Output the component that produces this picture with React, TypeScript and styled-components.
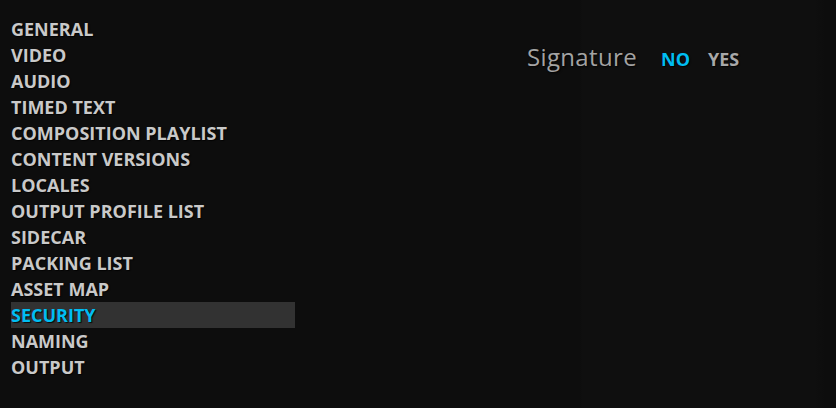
import React from "react";
import styled, { createGlobalStyle } from "styled-components";

const Global = createGlobalStyle`
  html, body { margin: 0; padding: 0; background: #0d0d0d; }
  body { font-family: "Open Sans", "Liberation Sans", sans-serif; }
`;

const Page = styled.div`
  width: 836px;
  height: 408px;
  display: flex;
  background:
    linear-gradient(90deg, transparent 0, transparent 580px, #0f0f0f 582px, #0f0f0f 815px, #0d0d0d 825px),
    #0d0d0d;
  overflow: hidden;
`;

const Menu = styled.ul`
  list-style: none;
  margin: 0;
  padding: 16px 0 0 11px;
  width: 284px;
  flex: none;
  display: flex;
  flex-direction: column;
`;

const MenuItem = styled.li<{ $active?: boolean }>`
  height: 26px;
  line-height: 26px;
  font-size: 18px;
  font-weight: 700;
  color: ${(p) => (p.$active ? "#00bdf2" : "#c9c9c9")};
  background: ${(p) => (p.$active ? "#323232" : "transparent")};
  text-shadow: 1px 1px 1px rgba(0, 0, 0, 0.8);
  white-space: nowrap;
`;

const Content = styled.div`
  flex: 1;
  padding: 40px 0 0 232px;
`;

const Field = styled.div`
  display: flex;
  align-items: baseline;
`;

const Label = styled.span`
  font-size: 24px;
  letter-spacing: 0.35px;
  color: #a3a3a3;
  text-shadow: 1px 1px 2px rgba(0, 0, 0, 0.9);
  margin-right: 24px;
`;

const Option = styled.span<{ $selected?: boolean }>`
  font-size: 18px;
  font-weight: 700;
  color: ${(p) => (p.$selected ? "#00bdf2" : "#a8a8a8")};
  text-shadow: 1px 1px 1px rgba(0, 0, 0, 0.8);
  margin-right: 18px;
`;

const items = [
  "GENERAL",
  "VIDEO",
  "AUDIO",
  "TIMED TEXT",
  "COMPOSITION PLAYLIST",
  "CONTENT VERSIONS",
  "LOCALES",
  "OUTPUT PROFILE LIST",
  "SIDECAR",
  "PACKING LIST",
  "ASSET MAP",
  "SECURITY",
  "NAMING",
  "OUTPUT",
];

export default function App() {
  return (
    <>
      <Global />
      <Page>
        <Menu>
          {items.map((it) => (
            <MenuItem key={it} $active={it === "SECURITY"}>
              {it}
            </MenuItem>
          ))}
        </Menu>
        <Content>
          <Field>
            <Label>Signature</Label>
            <Option $selected>NO</Option>
            <Option>YES</Option>
          </Field>
        </Content>
      </Page>
    </>
  );
}
